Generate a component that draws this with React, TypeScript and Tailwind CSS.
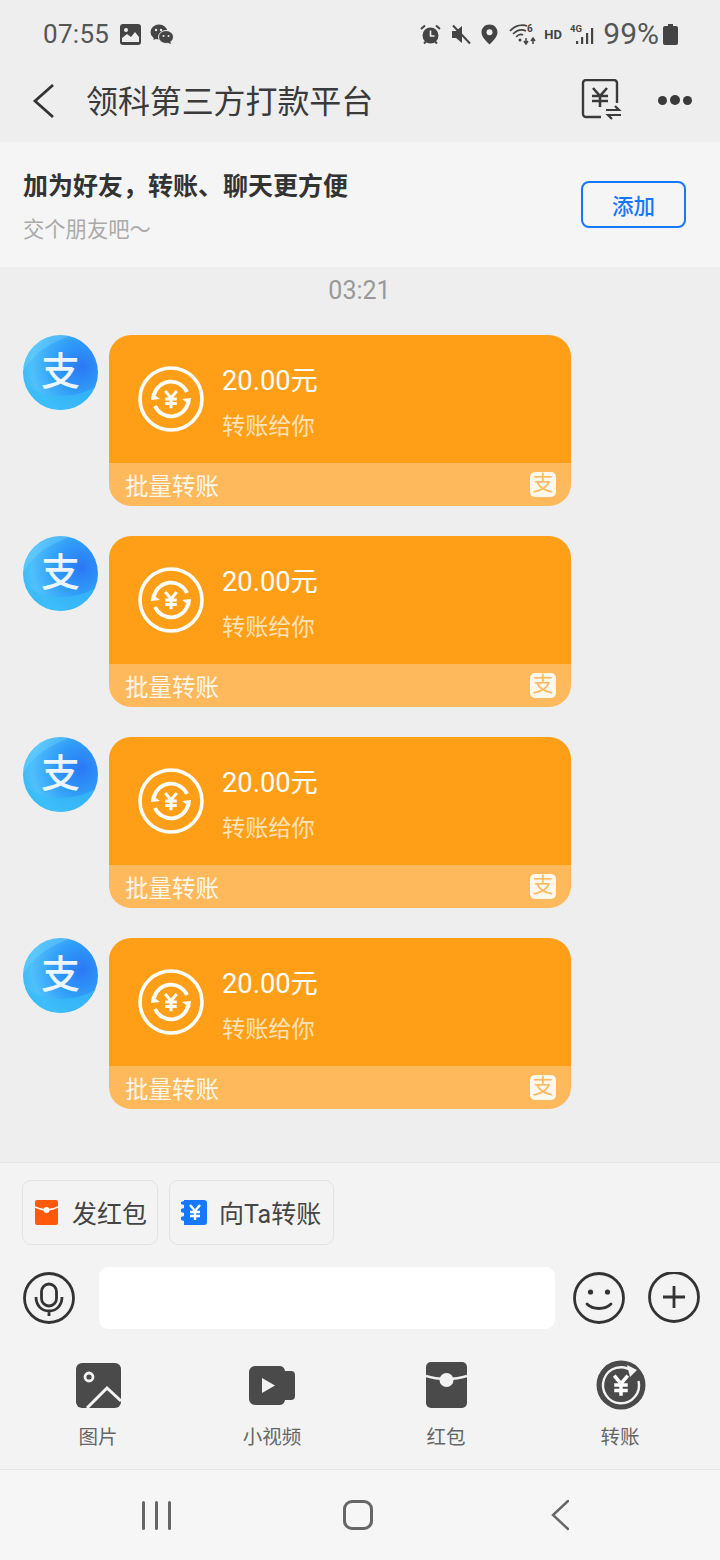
import React from 'react'

const cjk = "font-['Roboto','Noto_Sans_CJK_SC',sans-serif]"

const Yen = ({ color = '#fff', w = 2 }: { color?: string; w?: number }) => (
  <g stroke={color} strokeWidth={w} fill="none">
    <path d="M-5 -7 L0 -1 L5 -7 M0 -1 V8 M-5 0 H5 M-5 4 H5" />
  </g>
)

const AlipayAvatar = () => (
  <div className="w-[75px] h-[75px] rounded-full shrink-0 overflow-hidden flex items-center justify-center bg-[radial-gradient(circle_at_78%_42%,#2a78f5_0%,#2f9bf8_35%,#4fc0fb_68%,#27b4f3_100%)] relative">
    <svg width="75" height="75" viewBox="0 0 75 75" className="absolute inset-0">
      <path d="M0 36 C14 14 30 8 48 0 L18 0 L0 14 Z" fill="#7ddcff" opacity="0.3" />
      <path d="M2 50 C20 62 48 66 72 52 C66 68 50 75 37 75 C20 75 8 64 2 50 Z" fill="#36bcf8" opacity="0.7" />
    </svg>
    <span className={`relative ${cjk} text-[39px] leading-none font-medium text-white/90 -mt-[1px]`}>支</span>
  </div>
)

const Card = () => (
  <div className="flex items-start pl-[23px] gap-[11px]">
    <AlipayAvatar />
    <div className="w-[462px] h-[171px] rounded-[22px] overflow-hidden flex flex-col">
      <div className="h-[128px] bg-[#ff9f18] flex items-center pl-[29px]">
        <svg width="66" height="66" viewBox="-33 -33 66 66">
          <circle r="31" stroke="#fff" strokeWidth="3.6" fill="none" />
          <path d="M-17 -4 A17.5 17.5 0 0 1 16 -7" stroke="#fff" strokeWidth="3.8" fill="none" />
          <path d="M17 4 A17.5 17.5 0 0 1 -16 7" stroke="#fff" strokeWidth="3.8" fill="none" />
          <path d="M-19 -6 L-11 0 L-20 1 Z M19 6 L11 0 L20 -1 Z" fill="#fff" />
          <g transform="scale(1.15)"><Yen w={2.6} /></g>
        </svg>
        <div className={`ml-[18px] pt-[14px] ${cjk}`}>
          <div className="text-[27.3px] leading-[32px] text-white h-[32px] -mt-[5px]">20.00元</div>
          <div className="text-[23.2px] leading-[32px] text-[#ffe2b8] mt-[13px]">转账给你</div>
        </div>
      </div>
      <div className="flex-1 bg-[#ffb95d] flex items-center justify-between pl-[16px] pr-[15px]">
        <span className={`${cjk} text-[23.5px] leading-none text-[#fff7ea] mt-[7px]`}>批量转账</span>
        <div className="w-[26px] h-[25px] rounded-[5px] bg-[#fff8ec] flex items-center justify-center">
          <span className={`${cjk} text-[21px] leading-none text-[#ffb95d] -mt-[2px]`}>支</span>
        </div>
      </div>
    </div>
  </div>
)

const StatusBar = () => (
  <div className={`h-[68px] flex items-center pl-[43px] pr-[42px] text-[#555] ${cjk}`}>
    <span className="text-[26px] leading-none tracking-[0.3px]">07:55</span>
    <svg width="21" height="21" viewBox="0 0 21 21" className="ml-[11px]">
      <rect width="21" height="21" rx="3" fill="#444" />
      <circle cx="6" cy="6" r="2" fill="#eee" />
      <path d="M2 18 V14 L7 10 L11 13 L15 8 L19 13 V18 Z" fill="#eee" />
    </svg>
    <svg width="24" height="21" viewBox="0 0 24 21" className="ml-[9px]">
      <ellipse cx="9" cy="8" rx="8.5" ry="7.5" fill="#444" />
      <path d="M4 12 L3.5 16 L8 14 Z" fill="#444" />
      <ellipse cx="16" cy="13" rx="7.5" ry="6.5" fill="#444" stroke="#eee" strokeWidth="1" />
      <path d="M20 17 L21 20 L17 18.5 Z" fill="#444" />
      <circle cx="6" cy="6" r="1.2" fill="#eee" />
      <circle cx="11" cy="6" r="1.2" fill="#eee" />
      <circle cx="13.5" cy="12" r="1" fill="#eee" />
      <circle cx="18.5" cy="12" r="1" fill="#eee" />
    </svg>
    <div className="ml-auto flex items-center">
      <svg width="21" height="21" viewBox="0 0 21 21">
        <circle cx="10.5" cy="11.5" r="8" fill="#444" />
        <path d="M10.5 6.5 V12 H14.5" stroke="#eee" strokeWidth="1.6" fill="none" />
        <path d="M1 5 L5 1.5 M20 5 L16 1.5 M4 19.5 L6 17.5 M17 19.5 L15 17.5" stroke="#444" strokeWidth="2" />
      </svg>
      <svg width="20" height="21" viewBox="0 0 20 21" className="ml-[10px]">
        <path d="M1 7 H5 L11 2 V19 L5 14 H1 Z" fill="#444" />
        <path d="M2 1.5 L19 19.5" stroke="#444" strokeWidth="2" />
      </svg>
      <svg width="17" height="21" viewBox="0 0 17 21" className="ml-[10px]">
        <path d="M8.5 0.5 C3.8 0.5 0.5 4 0.5 8.3 C0.5 13 5.5 17.5 8.5 20.5 C11.5 17.5 16.5 13 16.5 8.3 C16.5 4 13.2 0.5 8.5 0.5 Z" fill="#444" />
        <circle cx="8.5" cy="8.2" r="3" fill="#eee" />
      </svg>
      <svg width="28" height="22" viewBox="0 0 28 22" className="ml-[11px]">
        <g stroke="#444" strokeWidth="1.7" fill="none">
          <path d="M1 8 C6 2 14 1 18 3" />
          <path d="M4 11 C8 7 13 6 17 8" />
          <path d="M7 14 C9 12 12 11 14 12" />
        </g>
        <circle cx="11" cy="17" r="1.5" fill="#444" />
        <path d="M17 15 V20 M15 18 L17 21 L19 18 M24 21 V16 M22 18 L24 15 L26 18" stroke="#444" strokeWidth="1.5" fill="none" />
        <text x="18" y="9" fontSize="10" fontWeight="700" fill="#444" fontFamily="Roboto">6</text>
      </svg>
      <span className="ml-[7px] text-[13px] font-bold leading-none text-[#444] w-[18px]">HD</span>
      <svg width="27" height="22" viewBox="0 0 27 22" className="ml-[8px]">
        <text x="0" y="9" fontSize="9.5" fontWeight="700" fill="#444" fontFamily="Roboto">4G</text>
        <rect x="6" y="18" width="2.2" height="3" fill="#444" />
        <rect x="11" y="14" width="2.2" height="7" fill="#444" />
        <rect x="16" y="10" width="2.2" height="11" fill="#444" />
        <rect x="21" y="5" width="2.2" height="16" fill="#444" />
      </svg>
      <span className="ml-[6px] text-[30px] leading-none">99%</span>
      <svg width="15" height="21" viewBox="0 0 15 21" className="ml-[4px]">
        <path d="M5 0 H10 V2 H13 A2 2 0 0 1 15 4 V19 A2 2 0 0 1 13 21 H2 A2 2 0 0 1 0 19 V4 A2 2 0 0 1 2 2 H5 Z" fill="#444" />
      </svg>
    </div>
  </div>
)

const Header = () => (
  <div className="h-[74px] flex items-center pl-[32px] pr-[28px]">
    <svg width="24" height="36" viewBox="0 0 24 36" className="-mt-[8px]">
      <path d="M21 2 L3 18 L21 34" stroke="#333" strokeWidth="2.8" fill="none" />
    </svg>
    <span className={`ml-[30px] ${cjk} text-[32px] leading-none text-[#3a3a3a] -mt-[6px] tracking-[-0.1px]`}>领科第三方打款平台</span>
    <svg width="42" height="42" viewBox="0 0 42 42" className="ml-auto -mt-[10px]">
      <path d="M20 38 H5 A3 3 0 0 1 2 35 V4 A3 3 0 0 1 5 1 H33 A3 3 0 0 1 36 4 V24" stroke="#3a3a3a" strokeWidth="2.4" fill="none" />
      <path d="M12 9 L19 17 L26 9 M19 17 V28 M11 17 H27 M11 22 H27" stroke="#3a3a3a" strokeWidth="2.6" fill="none" />
      <path d="M25 31 H38 L34 27 M40 36 H27 L31 40" stroke="#3a3a3a" strokeWidth="2.2" fill="none" />
    </svg>
    <div className="ml-[35px] -mt-[10px] flex items-center gap-[3px]">
      <div className="w-[9px] h-[9px] rounded-full bg-[#3a3a3a]" />
      <div className="w-[10px] h-[10px] rounded-full bg-[#3a3a3a]" />
      <div className="w-[9px] h-[9px] rounded-full bg-[#3a3a3a]" />
    </div>
  </div>
)

const Banner = () => (
  <div className={`h-[125px] bg-[#f5f5f5] flex items-center pl-[23px] pr-[34px] ${cjk}`}>
    <div className="pt-[7px]">
      <div className="text-[25px] leading-[32px] font-bold text-[#333]">{'加为好友\uFF0C转账、聊天更方便'}</div>
      <div className="text-[21.3px] leading-[30px] text-[#aaa] mt-[12px]">交个朋友吧〜</div>
    </div>
    <button className="ml-auto w-[105px] h-[47px] rounded-[8px] border-2 border-[#1677ff] text-[#1677ff] text-[21.5px] font-medium flex items-center justify-center pt-[5px]">添加</button>
  </div>
)

const QuickButton = ({ icon, label, width }: { icon: React.ReactNode; label: string; width: string }) => (
  <div className={`${width} h-[65px] rounded-[9px] border border-[#e2e2e2] flex items-center ${cjk}`}>
    {icon}
    <span className="text-[25px] leading-none text-[#444] mt-[3px]">{label}</span>
  </div>
)

function GridItem({ label, children }: { label: string; children: React.ReactNode }) {
  return (
    <div className={`flex flex-col items-center ${cjk}`}>
      <div className="h-[50px] flex items-center justify-center">{children}</div>
      <span className="mt-[15px] text-[19.5px] leading-[26px] text-[#666]">{label}</span>
    </div>
  )
}

const Composer = () => (
  <div className="h-[307px] bg-[#f3f3f3] border-t border-[#e6e6e6] flex flex-col">
    <div className="flex gap-[11px] pl-[22px] pt-[17px]">
      <QuickButton
        width="w-[136px]"
        label="发红包"
        icon={
          <svg width="23" height="25" viewBox="0 0 23 25" className="ml-[12px] mr-[14px]">
            <rect width="23" height="25" rx="2" fill="#ff5a0a" />
            <path d="M0 7 C7 11 16 11 23 7" stroke="#fff" strokeWidth="1.5" fill="none" />
            <circle cx="11.5" cy="10" r="3" fill="#fff" />
          </svg>
        }
      />
      <QuickButton
        width="w-[165px]"
        label="向Ta转账"
        icon={
          <svg width="27" height="25" viewBox="0 0 27 25" className="ml-[10px] mr-[12px]">
            <path d="M4 0 H24 A3 3 0 0 1 27 3 V22 A3 3 0 0 1 24 25 H4 V21 L1 20 V17 L4 16 V13 L1 12 V9 L4 8 V5 L1 4 V2 L4 1 Z" fill="#1677ff" />
            <g transform="translate(15 12)"><Yen w={2.4} /></g>
          </svg>
        }
      />
    </div>
    <div className="flex items-center pl-[23px] mt-[22px] h-[62px]">
      <svg width="52" height="52" viewBox="0 0 52 52">
        <circle cx="26" cy="26" r="24.5" stroke="#333" strokeWidth="2.8" fill="none" />
        <rect x="18.5" y="12" width="15" height="22" rx="7.5" stroke="#333" strokeWidth="2.8" fill="none" />
        <path d="M13 25 C13 34 19 39 26 39 C33 39 39 34 39 25 M26 39 V44" stroke="#333" strokeWidth="2.8" fill="none" />
      </svg>
      <div className="ml-[24px] w-[456px] h-[62px] rounded-[9px] bg-white" />
      <svg width="52" height="52" viewBox="0 0 52 52" className="ml-[18px]">
        <circle cx="26" cy="26" r="24.5" stroke="#333" strokeWidth="2.8" fill="none" />
        <circle cx="17.5" cy="20" r="2.6" fill="#333" />
        <circle cx="34.5" cy="20" r="2.6" fill="#333" />
        <path d="M14 32 C20 38 32 38 38 32" stroke="#333" strokeWidth="2.8" strokeLinecap="round" fill="none" />
      </svg>
      <svg width="52" height="52" viewBox="0 0 52 52" className="ml-[23px]">
        <circle cx="26" cy="25" r="24.5" stroke="#333" strokeWidth="2.8" fill="none" />
        <path d="M15 25 H37 M26 14 V36" stroke="#333" strokeWidth="2.8" fill="none" />
      </svg>
    </div>
    <div className="grid grid-cols-4 pl-[11px] pr-[13px] mt-[31px]">
      <GridItem label="图片">
        <svg width="45" height="45" viewBox="0 0 45 45">
          <rect width="45" height="45" rx="6" fill="#4a4a4a" />
          <circle cx="13" cy="14" r="4" fill="none" stroke="#f3f3f3" strokeWidth="2.8" />
          <path d="M11 45 L31 25 L45 38" stroke="#f3f3f3" strokeWidth="3" fill="none" />
        </svg>
      </GridItem>
      <GridItem label="小视频">
        <svg width="46" height="39" viewBox="0 0 46 39">
          <path d="M6 0 H30 A6 6 0 0 1 36 5 H42 A4 4 0 0 1 46 9 V30 A4 4 0 0 1 42 34 H36 A6 6 0 0 1 30 39 H6 A6 6 0 0 1 0 33 V6 A6 6 0 0 1 6 0 Z" fill="#4a4a4a" />
          <path d="M13 12 L26 19.5 L13 27 Z" fill="#f3f3f3" />
        </svg>
      </GridItem>
      <GridItem label="红包">
        <svg width="41" height="46" viewBox="0 0 41 46">
          <rect width="41" height="46" rx="5" fill="#4a4a4a" />
          <path d="M0 14 C12 18 29 18 41 14" stroke="#f3f3f3" strokeWidth="2.5" fill="none" />
          <circle cx="20.5" cy="18" r="7" fill="#f3f3f3" />
        </svg>
      </GridItem>
      <GridItem label="转账">
        <svg width="50" height="50" viewBox="-25 -25 50 50" className="ml-[2px]">
          <circle r="24.5" fill="#4a4a4a" />
          <path d="M11 -14 A18 18 0 1 0 17.5 -4" stroke="#f3f3f3" strokeWidth="2.4" fill="none" />
          <path d="M6 -20 L16 -15 L9 -8 Z" fill="#f3f3f3" />
          <g transform="scale(1.35)"><Yen w={2.6} /></g>
        </svg>
      </GridItem>
    </div>
  </div>
)

const NavBar = () => (
  <div className="h-[91px] bg-[#f6f6f6] border-t border-[#e6e6e6] flex items-center pl-[142px]">
    <div className="flex gap-[10px]">
      <div className="w-[3px] h-[29px] rounded-full bg-[#666]" />
      <div className="w-[3px] h-[29px] rounded-full bg-[#666]" />
      <div className="w-[3px] h-[29px] rounded-full bg-[#666]" />
    </div>
    <div className="ml-[172px] w-[30px] h-[30px] rounded-[9px] border-[3px] border-[#666]" />
    <svg width="18" height="32" viewBox="0 0 18 32" className="ml-[178px]">
      <path d="M17 2 L2 16 L17 30" stroke="#666" strokeWidth="2.4" fill="none" strokeLinecap="round" />
    </svg>
  </div>
)

export default function App() {
  return (
    <div className="w-[720px] h-[1560px] bg-[#eeeeee] flex flex-col overflow-hidden">
      <StatusBar />
      <Header />
      <Banner />
      <div className="h-[895px] flex flex-col">
        <div className={`h-[68px] pt-[9px] text-center text-[25px] leading-[30px] text-[#999] ${cjk} pr-[1px]`}>03:21</div>
        <div className="flex flex-col gap-[30px]">
          <Card />
          <Card />
          <Card />
          <Card />
        </div>
      </div>
      <Composer />
      <NavBar />
    </div>
  )
}
